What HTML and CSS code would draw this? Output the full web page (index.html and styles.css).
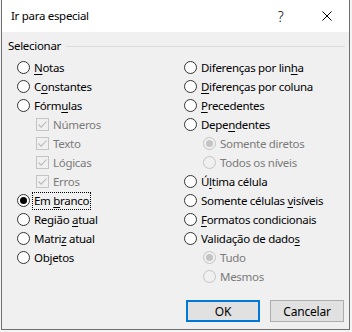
FILE: index.html
```html
<!DOCTYPE html>
<html lang="pt">
<head>
<meta charset="utf-8">
<title>Ir para especial</title>
<link rel="stylesheet" href="styles.css">
</head>
<body>
<div class="dialog">
  <div class="titlebar">
    <span class="title">Ir para especial</span>
    <span class="tb-btn help">?</span>
    <span class="tb-btn close">
      <svg width="10" height="10" viewBox="0 0 10 10"><path d="M0.5 0.5 L9.5 9.5 M9.5 0.5 L0.5 9.5" stroke="#000" stroke-width="1" fill="none"/></svg>
    </span>
  </div>
  <div class="content">
    <div class="group-head"><span class="group-label">Selecionar</span><span class="group-line"></span></div>
    <div class="cols">
      <div class="col">
        <div class="opt"><span class="radio"></span><span class="lbl"><u>N</u>otas</span></div>
        <div class="opt"><span class="radio"></span><span class="lbl">C<u>o</u>nstantes</span></div>
        <div class="opt"><span class="radio"></span><span class="lbl">Fórm<u>u</u>las</span></div>
        <div class="opt sub disabled"><span class="check"><svg width="11" height="11" viewBox="0 0 11 11"><path d="M1.5 5.5 L4.2 8.2 L9.5 2.5" stroke="#b9b9b9" stroke-width="1.1" fill="none"/></svg></span><span class="lbl">Números</span></div>
        <div class="opt sub disabled"><span class="check"><svg width="11" height="11" viewBox="0 0 11 11"><path d="M1.5 5.5 L4.2 8.2 L9.5 2.5" stroke="#b9b9b9" stroke-width="1.1" fill="none"/></svg></span><span class="lbl">Texto</span></div>
        <div class="opt sub disabled"><span class="check"><svg width="11" height="11" viewBox="0 0 11 11"><path d="M1.5 5.5 L4.2 8.2 L9.5 2.5" stroke="#b9b9b9" stroke-width="1.1" fill="none"/></svg></span><span class="lbl">Lógicas</span></div>
        <div class="opt sub disabled"><span class="check"><svg width="11" height="11" viewBox="0 0 11 11"><path d="M1.5 5.5 L4.2 8.2 L9.5 2.5" stroke="#b9b9b9" stroke-width="1.1" fill="none"/></svg></span><span class="lbl">Erros</span></div>
        <div class="opt"><span class="radio checked"></span><span class="lbl focus">Em <u>b</u>ranco</span></div>
        <div class="opt"><span class="radio"></span><span class="lbl">Região <u>a</u>tual</span></div>
        <div class="opt"><span class="radio"></span><span class="lbl">Matri<u>z</u> atual</span></div>
        <div class="opt"><span class="radio"></span><span class="lbl">Ob<u>j</u>etos</span></div>
      </div>
      <div class="col">
        <div class="opt"><span class="radio"></span><span class="lbl">Diferenças por lin<u>h</u>a</span></div>
        <div class="opt"><span class="radio"></span><span class="lbl"><u>D</u>iferenças por coluna</span></div>
        <div class="opt"><span class="radio"></span><span class="lbl"><u>P</u>recedentes</span></div>
        <div class="opt"><span class="radio"></span><span class="lbl">Depe<u>n</u>dentes</span></div>
        <div class="opt sub disabled"><span class="radio checked"></span><span class="lbl">Somente diretos</span></div>
        <div class="opt sub disabled"><span class="radio"></span><span class="lbl">Todos os níveis</span></div>
        <div class="opt"><span class="radio"></span><span class="lbl">Ú<u>l</u>tima célula</span></div>
        <div class="opt"><span class="radio"></span><span class="lbl">Somente células <u>v</u>isíveis</span></div>
        <div class="opt"><span class="radio"></span><span class="lbl"><u>F</u>ormatos condicionais</span></div>
        <div class="opt"><span class="radio"></span><span class="lbl">Validação de dado<u>s</u></span></div>
        <div class="opt sub disabled"><span class="radio checked"></span><span class="lbl">Tudo</span></div>
        <div class="opt sub disabled"><span class="radio"></span><span class="lbl">Mesmos</span></div>
      </div>
    </div>
    <div class="buttons">
      <button class="btn default">OK</button>
      <button class="btn">Cancelar</button>
    </div>
  </div>
</div>
</body>
</html>
```

FILE: styles.css
```css
html, body {
  margin: 0;
  padding: 0;
}
body {
  width: 352px;
  height: 332px;
  background: #f4f4f4;
  font-family: "Noto Sans", "Open Sans", sans-serif;
  font-size: 11.5px;
  letter-spacing: -0.3px;
  color: #000;
  overflow: hidden;
}
.dialog {
  box-sizing: border-box;
  margin-left: 1px;
  width: 349px;
  height: 330px;
  border: 1px solid #6f6f6f;
  border-top: none;
  background: #f0f0f0;
  display: flex;
  flex-direction: column;
}
.titlebar {
  height: 32px;
  background: #fff;
  display: flex;
  align-items: center;
}
.title {
  flex: 1;
  padding-left: 9px;
  line-height: 16px;
}
.tb-btn {
  width: 44px;
  height: 32px;
  display: flex;
  align-items: center;
  justify-content: center;
}
.help {
  font-size: 14px;
  font-weight: 300;
  padding-right: 5px;
  box-sizing: border-box;
}
.content {
  flex: 1;
  padding-top: 6px;
  display: flex;
  flex-direction: column;
}
.group-head {
  height: 16px;
  display: flex;
  align-items: center;
  padding-left: 6px;
  padding-right: 4px;
}
.group-label {
  line-height: 16px;
}
.group-line {
  flex: 1;
  height: 1px;
  background: #dcdcdc;
  margin-left: 5px;
}
.cols {
  margin-top: 4px;
  padding-left: 15px;
  display: grid;
  grid-template-columns: 167px 1fr;
}
.opt {
  height: 19px;
  display: flex;
  align-items: center;
}
.opt.sub {
  padding-left: 19px;
}
.radio {
  box-sizing: border-box;
  width: 13px;
  height: 13px;
  border: 1px solid #333;
  border-radius: 50%;
  background: #fff;
  display: flex;
  align-items: center;
  justify-content: center;
  flex: none;
}
.radio.checked::after {
  content: "";
  width: 7px;
  height: 7px;
  border-radius: 50%;
  background: #000;
}
.check {
  box-sizing: border-box;
  width: 13px;
  height: 13px;
  border: 1px solid #c4c4c4;
  background: #f0f0f0;
  display: flex;
  align-items: center;
  justify-content: center;
  flex: none;
}
.disabled .radio {
  border-color: #c4c4c4;
  background: #f0f0f0;
}
.disabled .radio.checked::after {
  background: #c4c4c4;
}
.lbl {
  margin-left: 4px;
  line-height: 16px;
  white-space: nowrap;
}
.disabled .lbl {
  color: #7a7a7a;
}
.lbl u {
  text-decoration-thickness: 1px;
  text-underline-offset: 2px;
}
.focus {
  outline: 1px dotted #000;
  outline-offset: 0;
  padding: 0 1px;
  margin-left: 3px;
}
.buttons {
  margin-top: 14px;
  display: flex;
  justify-content: flex-end;
  gap: 10px;
  padding-right: 5px;
}
.btn {
  box-sizing: border-box;
  width: 74px;
  height: 22px;
  margin: 0;
  padding: 0;
  border: 1px solid #adadad;
  background: #e1e1e1;
  font-family: inherit;
  font-size: 12px;
  letter-spacing: -0.2px;
  color: #000;
}
.btn.default {
  border: 2px solid #0078d7;
}
```
